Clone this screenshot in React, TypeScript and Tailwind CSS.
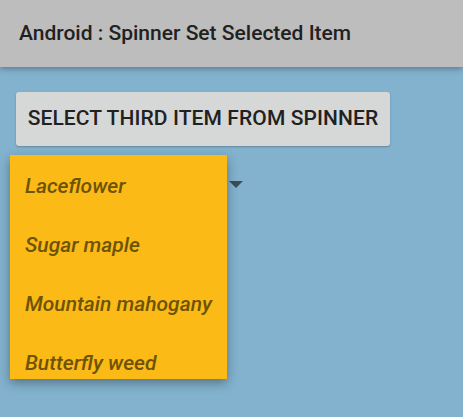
import React from "react";

const items = ["Laceflower", "Sugar maple", "Mountain mahogany", "Butterfly weed"];

const App = () => {
  return (
    <div className="w-[463px] h-[417px] bg-[#82b2ce] overflow-hidden relative" style={{ fontFamily: "Roboto, sans-serif" }}>
      <div className="h-[67px] bg-[#bdbdbd] flex items-center pl-[19px] shadow-[0_2px_6px_rgba(0,0,0,0.3)] relative z-10">
        <h1 className="text-[21px] font-medium text-[#212121] pt-[1px]">Android : Spinner Set Selected Item</h1>
      </div>
      <div className="pl-4 pt-[25px]">
        <button className="h-[54px] w-[374px] bg-[#d6d7d7] rounded-[3px] shadow-[0_1px_2px_rgba(0,0,0,0.25)] text-[21px] font-medium text-[#212121] tracking-[0.1px]">
          SELECT THIRD ITEM FROM SPINNER
        </button>
      </div>
      <div className="relative">
        <svg className="absolute left-[229px] top-[35px]" width="14" height="7" viewBox="0 0 14 7">
          <path d="M0 0 L14 0 L7 7 Z" fill="#3d4d57" />
        </svg>
        <ul className="absolute left-[10px] top-[9px] w-[217px] h-[224px] bg-[#fcba16] shadow-[0_4px_10px_rgba(0,0,0,0.35)] overflow-hidden pt-[19px]">
          {items.map((item) => (
            <li className="h-[59px] pl-[15px] text-[21px] font-medium italic text-[#6d5306] leading-[24px]" key={item}>
              {item}
            </li>
          ))}
        </ul>
      </div>
    </div>
  );
};

export default App;
